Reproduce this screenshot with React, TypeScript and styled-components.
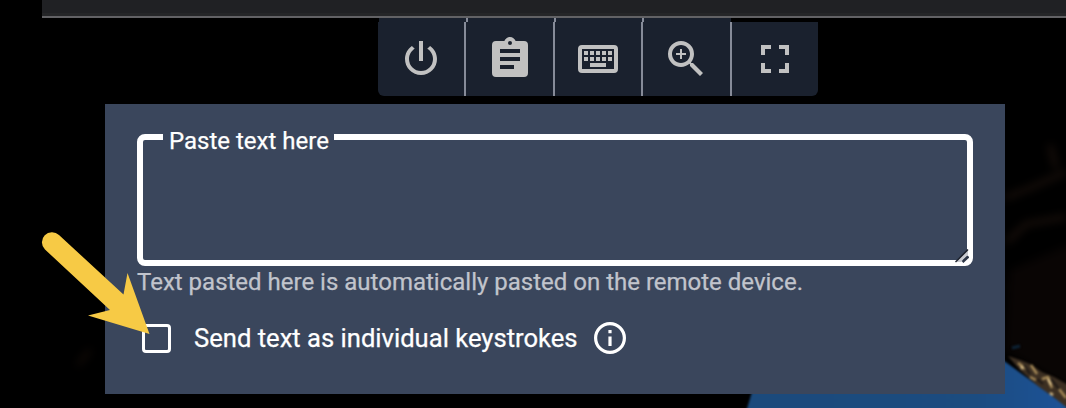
import React from "react";
import styled, { createGlobalStyle } from "styled-components";

const Global = createGlobalStyle`
  * { box-sizing: border-box; }
  body { margin: 0; background: #000; }
`;

const Page = styled.main`
  position: relative;
  width: 1066px;
  height: 408px;
  overflow: hidden;
  background: #000;
  font-family: Roboto, "Liberation Sans", sans-serif;
  font-size: 24px;
`;

const Wallpaper = styled.svg`
  position: absolute;
  inset: 0;
`;

const Content = styled.div`
  position: relative;
  display: flex;
  flex-direction: column;
`;

const WindowBar = styled.header`
  height: 18px;
  margin-left: 42px;
  background: linear-gradient(#202124 13px, #252628 13px);
  border-bottom: 2px solid #626265;
`;

const Toolbar = styled.nav`
  width: 440px;
  height: 78px;
  margin-left: 378px;
  display: flex;
  flex-direction: column;
`;

const ToolbarLip = styled.div`
  display: flex;
  height: 4px;
  margin-left: 1px;
`;

const LipCell = styled.span<{ $width: number; $divider?: boolean }>`
  width: ${(p) => p.$width}px;
  background: #1a212e;
  border-right: ${(p) => (p.$divider ? "2px solid #868b98" : "0")};
`;

const ToolRow = styled.div`
  display: flex;
  height: 74px;
  border-radius: 0 0 6px 6px;
  overflow: hidden;
`;

const ToolButton = styled.button<{ $width: number; $pad: string; $last?: boolean }>`
  width: ${(p) => p.$width}px;
  height: 74px;
  padding: ${(p) => p.$pad};
  border: 0;
  border-right: ${(p) => (p.$last ? "0" : "2px solid #868b98")};
  background: #1a212e;
  color: #c1c1c1;
  display: flex;
  justify-content: center;
  align-items: center;
`;

const ToolIcon = styled.svg`
  width: 48px;
  height: 48px;
  flex: none;
  display: block;
  fill: currentColor;
  fill-rule: evenodd;
`;

const Panel = styled.section`
  width: 900px;
  height: 290px;
  margin: 8px 0 0 105px;
  padding: 23px 32px 0;
  background: #3a465c;
  color: #fff;
  -webkit-text-stroke: 0.25px currentColor;
`;

const Field = styled.fieldset`
  position: relative;
  height: 139px;
  margin: 0;
  padding: 0 0 0 20px;
  border: 6px solid #fff;
  border-radius: 8px;
  min-width: 0;
`;

const Label = styled.legend`
  width: 171px;
  height: 20px;
  padding: 0 0 0 6px;
  line-height: 28px;
  white-space: nowrap;
`;

const Grip = styled.svg`
  position: absolute;
  right: -2px;
  bottom: -3px;
`;

const Helper = styled.p`
  margin: 2px 0 0;
  height: 28px;
  line-height: 28px;
  color: #c1c4cc;
  white-space: nowrap;
`;

const Option = styled.label`
  display: flex;
  align-items: center;
  height: 32px;
  margin-top: 26px;
  padding-left: 5px;
  white-space: nowrap;
`;

const Box = styled.span`
  width: 29px;
  height: 29px;
  border: 3px solid #fff;
  border-radius: 4px;
`;

const OptionText = styled.span`
  width: 400px;
  margin-left: 23px;
  font-size: 25.6px;
  line-height: 28px;
`;

const Pointer = styled.svg`
  position: absolute;
  left: 0;
  top: 0;
`;

const tools = [
  { name: "Power", width: 88, pad: "0", d: "M16.56 5.44L15.11 6.89C16.84 7.94 18 9.83 18 12A6 6 0 0 1 12 18A6 6 0 0 1 6 12C6 9.83 7.16 7.94 8.88 6.88L7.44 5.44C5.36 6.88 4 9.28 4 12A8 8 0 0 0 12 20A8 8 0 0 0 20 12C20 9.28 18.64 6.88 16.56 5.44M13 3H11V13H13" },
  { name: "Clipboard", width: 89, pad: "0 0 0 1px", d: "M17 9H7V7H17M17 13H7V11H17M14 17H7V15H14M12 3A1 1 0 0 1 13 4A1 1 0 0 1 12 5A1 1 0 0 1 11 4A1 1 0 0 1 12 3M19 3H14.82C14.4 1.84 13.3 1 12 1C10.7 1 9.6 1.84 9.18 3H5A2 2 0 0 0 3 5V19A2 2 0 0 0 5 21H19A2 2 0 0 0 21 19V5A2 2 0 0 0 19 3Z" },
  { name: "Keyboard", width: 88, pad: "0", d: "M4 5A2 2 0 0 0 2 7V17A2 2 0 0 0 4 19H20A2 2 0 0 0 22 17V7A2 2 0 0 0 20 5H4M4 7H20V17H4V7M5 8V10H7V8H5M8 8V10H10V8H8M11 8V10H13V8H11M14 8V10H16V8H14M17 8V10H19V8H17M5 11V13H7V11H5M8 11V13H10V11H8M11 11V13H13V11H11M14 11V13H16V11H14M17 11V13H19V11H17M8 14V16H16V14H8Z" },
  { name: "Zoom", width: 89, pad: "0 1px 0 0", d: "M15.5 14L20.5 19L19 20.5L14 15.5V14.71L13.73 14.43C12.59 15.41 11.11 16 9.5 16A6.5 6.5 0 0 1 3 9.5A6.5 6.5 0 0 1 9.5 3A6.5 6.5 0 0 1 16 9.5C16 11.11 15.41 12.59 14.43 13.73L14.71 14H15.5M9.5 14C12 14 14 12 14 9.5C14 7 12 5 9.5 5C7 5 5 7 5 9.5C5 12 7 14 9.5 14M12 10H10V12H9V10H7V9H9V7H10V9H12V10Z" },
  { name: "Fullscreen", width: 86, pad: "0", d: "M5 5H10V7H7V10H5V5M14 5H19V10H17V7H14V5M17 14H19V19H14V17H17V14M10 17V19H5V14H7V17H10Z" },
];

export default function App() {
  return (
    <Page>
      <Global />
      <Wallpaper width="1066" height="408" viewBox="0 0 1066 408" aria-hidden="true">
        <defs>
          <filter id="soft" x="-20%" y="-20%" width="140%" height="140%" colorInterpolationFilters="sRGB">
            <feGaussianBlur stdDeviation="1" />
          </filter>
          <filter id="haze" x="-50%" y="-50%" width="200%" height="200%" colorInterpolationFilters="sRGB">
            <feGaussianBlur stdDeviation="4" />
          </filter>
          <linearGradient id="sky" x1="0" x2="1">
            <stop offset="0" stopColor="#1b4a7c" />
            <stop offset="0.7" stopColor="#1c4c80" />
            <stop offset="1" stopColor="#1d5399" />
          </linearGradient>
        </defs>
        <g filter="url(#haze)" fill="none" strokeWidth="4">
          <path d="M1005 198L1030 188L1066 172M1007 242L1026 224L1066 217M1050 145L1056 168M1008 287L1040 294L1066 288" stroke="#20140e" />
          <path d="M1010 270L1080 240V395L1005 350Z" fill="#090504" />
          <path d="M78 365L90 350" stroke="#150c08" />
        </g>
        <g filter="url(#soft)">
          <path d="M746 412L754 385L1000 358L1074 412Z" fill="url(#sky)" />
          <path d="M1012 348L1020 346" stroke="#0d2336" strokeWidth="3" />
          <path d="M1008 356L1020 360L1030 364L1042 372L1054 377L1070 386V410L1052 396L1038 386L1020 370Z" fill="#3c2f22" />
          <path d="M1018 363L1026 369M1031 365L1037 374M1042 379L1048 377L1052 388M1059 389L1066 398M1030 377L1036 380" stroke="#a88b58" strokeWidth="2.5" fill="none" />
          <path d="M1024 365L1030 374M1037 379L1043 384M1051 379L1059 389" stroke="#1b1614" strokeWidth="2" />
          <path d="M1048 379L1051 385M1050 393L1053 395M1021 366L1023 369" stroke="#dbc08a" strokeWidth="2.5" />
        </g>
      </Wallpaper>
      <Content>
        <WindowBar />
        <Toolbar>
          <ToolbarLip>
            <LipCell $width={89} $divider />
            <LipCell $width={88} $divider />
            <LipCell $width={88} $divider />
            <LipCell $width={87} />
          </ToolbarLip>
          <ToolRow>
            {tools.map((tool, i) => (
              <ToolButton key={tool.name} $width={tool.width} $pad={tool.pad} $last={i === 4} aria-label={tool.name}>
                <ToolIcon viewBox="0 0 24 24"><path d={tool.d} /></ToolIcon>
              </ToolButton>
            ))}
          </ToolRow>
        </Toolbar>
        <Panel>
          <Field>
            <Label>Paste text here</Label>
            <Grip width="14" height="14" viewBox="0 0 14 14">
              <path d="M1 13L13 1V6L6 13Z" fill="#c8cad0" />
              <path d="M0.5 13L13 0.5" stroke="#1d222d" strokeWidth="1.5" />
              <path d="M7.5 13L13.5 7.5" stroke="#2b3445" strokeWidth="2.5" />
            </Grip>
          </Field>
          <Helper>Text pasted here is automatically pasted on the remote device.</Helper>
          <Option>
            <Box />
            <OptionText>Send text as individual keystrokes</OptionText>
            <svg width="32" height="32" viewBox="2 2 20 20" fill="#fff">
              <path d="M11 9H13V7H11M12 20C7.59 20 4 16.41 4 12S7.59 4 12 4 20 7.59 20 12 16.41 20 12 20M12 2A10 10 0 0 0 2 12A10 10 0 0 0 12 22A10 10 0 0 0 22 12A10 10 0 0 0 12 2M11 17H13V11H11V17Z" />
            </svg>
          </Option>
        </Panel>
      </Content>
      <Pointer width="160" height="345" viewBox="0 0 160 345" aria-hidden="true">
        <path d="M59 235L123.5 294.5L127.5 273L149.5 334L88 315.5L110 310L45 249.5A10 10 0 0 1 59 235Z" fill="#f7ca45" />
      </Pointer>
    </Page>
  );
}
